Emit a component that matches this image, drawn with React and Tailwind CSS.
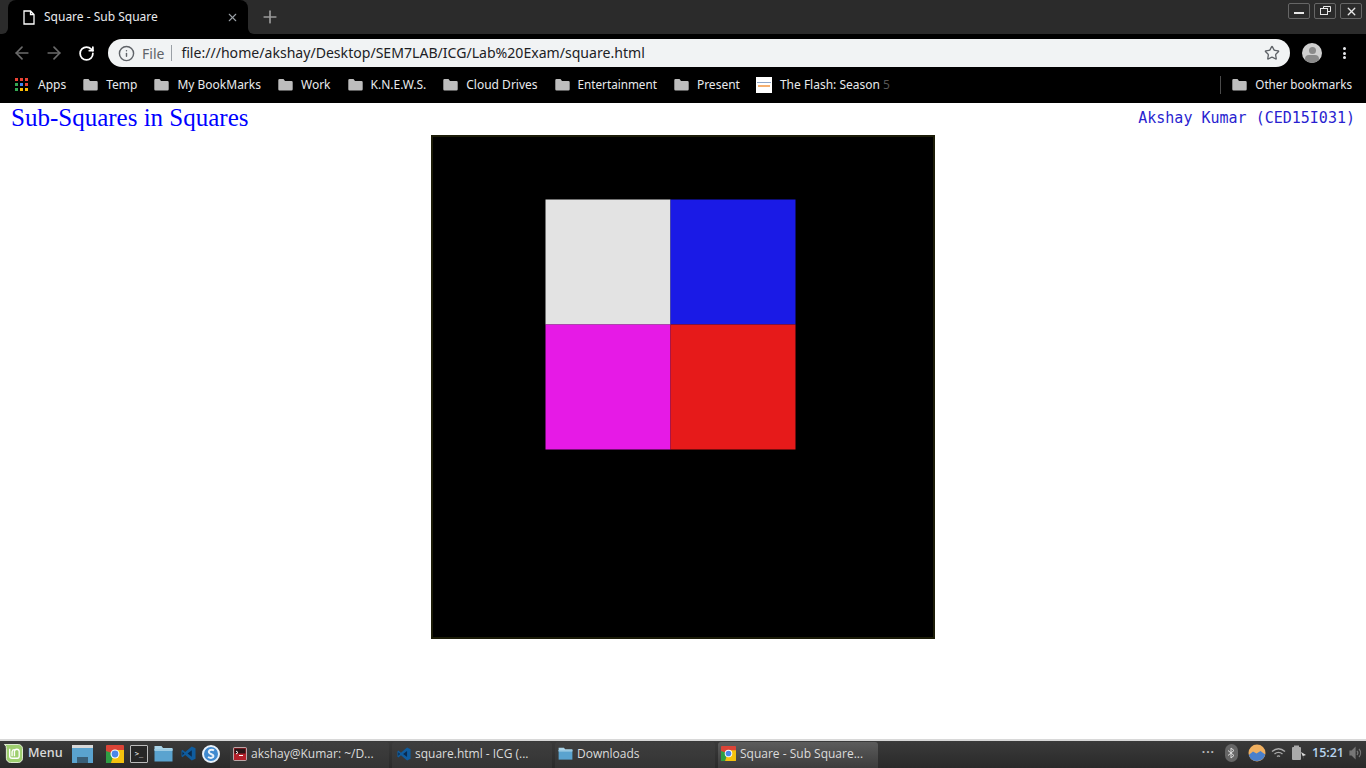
import React from 'react'
import { ArrowLeft, ArrowRight, RotateCw, Info, Star, X, Plus } from 'lucide-react'

const uiFont = "font-['Noto_Sans',sans-serif]"

const Folder = () => (
  <svg width="15" height="13" viewBox="0 0 15 13">
    <path d="M1.500 1h4l1.500 2h6.500a1.200 1.200 0 0 1 1.200 1.200v7.100a1.200 1.200 0 0 1-1.200 1.200h-12a1.200 1.200 0 0 1-1.200-1.200V2.200A1.200 1.200 0 0 1 1.500 1z" fill="#bdbdbd" />
  </svg>
)

const AppsGrid = () => {
  const colors = ['#ea4335', '#ea4335', '#ea4335', '#34a853', '#4285f4', '#ea4335', '#34a853', '#fbbc05', '#fbbc05']
  return (
    <div className="grid grid-cols-3 gap-[1.500px] w-[13px] h-[13px]">
      {colors.map((c, i) => (
        <div key={i} style={{ background: c }} />
      ))}
    </div>
  )
}

const ChromeIcon = ({ size = 18 }) => (
  <svg width={size} height={size} viewBox="0 0 18 18">
    <rect width="18" height="18" rx="1" fill="#db4437" />
    <path d="M0 6 L9 9 L5 18 L0 18z" fill="#2f9e44" />
    <path d="M9 5h9v12.500a.5.5 0 0 1-.5.5H5z" fill="#f4c20d" />
    <circle cx="9" cy="9" r="4.500" fill="#fff" />
    <circle cx="9" cy="9" r="3.400" fill="#4a86e8" />
  </svg>
)

const VsCode = ({ size = 15 }) => (
  <svg width={size} height={size} viewBox="0 0 16 16">
    <path d="M11.500 0.500 15.500 2.500V13.500L11.500 15.500 4.500 9.500 1.500 12 0.500 11V5L1.500 4 4.500 6.500z" fill="#0f5c9e" />
    <path d="M11.500 4.500 7 8l4.500 3.500z" fill="#0a2a4d" />
    <path d="M1.500 6 3.500 8 1.500 10z" fill="#0a2a4d" />
  </svg>
)

const FolderBlue = ({ width = 19, height = 17 }) => (
  <svg width={width} height={height} viewBox="0 0 19 17">
    <path d="M0.500 1h7l1.500 2h9.500v2H0.500z" fill="#a9d3e8" />
    <rect x="0.500" y="4" width="18" height="12.500" fill="#5aa3cf" />
    <rect x="0.500" y="4" width="18" height="2" fill="#9ccbe3" />
  </svg>
)

const TerminalRed = () => (
  <svg width="14" height="14" viewBox="0 0 14 14">
    <rect x="0.500" y="0.500" width="13" height="13" rx="1" fill="#b3202a" stroke="#ddd" strokeWidth="0.700" />
    <rect x="1.500" y="1.500" width="11" height="5" fill="#2b1416" />
    <path d="M3 4l2 1.500L3 7" stroke="#fff" fill="none" strokeWidth="1" />
    <path d="M6 8.500h4" stroke="#fff" strokeWidth="1" />
  </svg>
)

const Bookmark = ({ label, labelClass = 'text-[12px]' }) => (
  <div className="flex items-center gap-[8px] ml-[17px]">
    <Folder />
    <span className={`${labelClass} leading-none text-[#e8eaed] whitespace-nowrap`}>{label}</span>
  </div>
)

const TaskItem = ({ icon, label, width, active }) => (
  <div
    className={`flex items-center gap-[4px] h-[26px] mt-[1px] pl-[3px] pb-[3px] rounded-t-[3px] text-[#dcdcdc] text-[12px] whitespace-nowrap overflow-hidden ${width} ${
      active ? 'bg-gradient-to-b from-[#5c5c5c] to-[#3c3c3c]' : 'bg-gradient-to-b from-[#3e3e3e] to-[#343434]'
    }`}
  >
    {icon}
    <span>{label}</span>
  </div>
)

const WinBtn = ({ children }) => (
  <div className="w-[22px] h-[16px] rounded-[2px] border border-[#666] flex items-center justify-center text-[#e8e8e8]">
    {children}
  </div>
)

export default function App() {
  return (
    <div className="w-[1366px] h-[768px] flex flex-col overflow-hidden bg-white">
      {/* tab strip */}
      <div className={`h-[34px] shrink-0 bg-[linear-gradient(to_bottom,#2b2b2b_50%,#000_50%)] flex ${uiFont}`}>
        <div className="w-[8px] bg-[#2b2b2b] rounded-br-[6px]" />
        <div className="w-[240px] h-[34px] bg-black rounded-t-[8px] flex items-center pl-[15px] pr-[9px] text-[12px] text-[#e8eaed]">
          <svg width="12" height="15" viewBox="0 0 12 15" className="mr-[9px]">
            <path d="M1 1h6.500L11 4.500V14H1z M7.500 1v3.500H11" fill="none" stroke="#fff" strokeWidth="1.300" />
          </svg>
          <span>Square - Sub Square</span>
          <X size={13} strokeWidth={2} className="ml-auto text-[#9aa0a6]" />
        </div>
        <div className="flex-1 bg-[#2b2b2b] rounded-bl-[6px] flex pr-[4px]">
          <Plus size={20} strokeWidth={2} className="ml-[12px] mt-[7px] text-[#9a9a9a]" />
          <div className="ml-auto mt-[3px] flex gap-[4px]">
            <WinBtn>
              <div className="mt-[4px] w-[10px] h-[2px] bg-[#e8e8e8]" />
            </WinBtn>
            <WinBtn>
              <svg width="11" height="10" viewBox="0 0 11 10" fill="none" stroke="currentColor">
                <path d="M3.500 2.500V.5h7v5H8" />
                <rect x="0.500" y="2.500" width="7" height="6" />
              </svg>
            </WinBtn>
            <WinBtn>
              <X size={13} strokeWidth={2.500} />
            </WinBtn>
          </div>
        </div>
      </div>

      {/* toolbar */}
      <div className={`h-[36px] shrink-0 pt-[2px] bg-black flex items-center pl-[12px] ${uiFont}`}>
        <ArrowLeft size={20} strokeWidth={2} className="text-[#6b6b6b]" />
        <ArrowRight size={20} strokeWidth={2} className="ml-[12px] text-[#6b6b6b]" />
        <RotateCw size={17} strokeWidth={2.500} className="ml-[13.500px] text-white" />
        <div className="ml-[13.500px] w-[1182px] h-[28px] bg-[#f1f3f4] rounded-full flex items-center pl-[10px] pr-[10px]">
          <Info size={17} strokeWidth={2} className="text-[#5f6368]" />
          <span className="ml-[7px] text-[14px] text-[#5f6368]">File</span>
          <div className="ml-[7px] w-px h-[16px] bg-[#9aa0a6]" />
          <span className="ml-[9px] text-[14.080px] text-[#202124]">file:///home/akshay/Desktop/SEM7LAB/ICG/Lab%20Exam/square.html</span>
          <Star size={16} strokeWidth={2} className="ml-auto text-[#5f6368]" />
        </div>
        <div className="ml-[12px] w-[20px] h-[20px] rounded-full bg-[#d0d0d0] overflow-hidden flex flex-col items-center">
          <div className="mt-[4px] w-[7px] h-[7px] rounded-full bg-[#8a8a8a]" />
          <div className="mt-[1px] w-[14px] h-[8px] rounded-full bg-[#8a8a8a]" />
        </div>
        <div className="ml-[21px] flex flex-col gap-[1.500px]">
          <div className="w-[3px] h-[3px] rounded-full bg-[#e8eaed]" />
          <div className="w-[3px] h-[3px] rounded-full bg-[#e8eaed]" />
          <div className="w-[3px] h-[3px] rounded-full bg-[#e8eaed]" />
        </div>
      </div>

      {/* bookmarks */}
      <div className={`h-[33px] shrink-0 pb-[4px] bg-black flex items-center pl-[15px] pr-[14px] ${uiFont}`}>
        <div className="flex items-center gap-[10px]">
          <AppsGrid />
          <span className="text-[12px] leading-none text-[#e8eaed]">Apps</span>
        </div>
        <Bookmark label="Temp" />
        <Bookmark label="My BookMarks" />
        <Bookmark label="Work" />
        <Bookmark label="K.N.E.W.S." />
        <Bookmark label="Cloud Drives" />
        <Bookmark label="Entertainment" labelClass="text-[11.700px]" />
        <Bookmark label="Present" />
        <div className="ml-[16px] flex items-center gap-[8px]">
          <div className="w-[16px] h-[16px] bg-white flex flex-col items-center justify-center gap-[2px]">
            <div className="w-[14px] h-px bg-[#8fa6c8]" />
            <div className="w-[12px] h-[2px] bg-[#f5b070]" />
          </div>
          <span className="text-[12px] leading-none text-[#e8eaed] whitespace-nowrap">
            The Flash: Season <span className="text-[#555]">5</span>
          </span>
        </div>
        <div className="ml-auto w-px h-[18px] bg-[#4a4a4a]" />
        <div className="flex items-center gap-[8px] ml-[11px]">
          <Folder />
          <span className="text-[11.700px] leading-none text-[#e8eaed] whitespace-nowrap">Other bookmarks</span>
        </div>
      </div>

      {/* page */}
      <div className="flex-1 min-h-0 bg-white">
        <div className="h-[32px] flex justify-between pl-[11px] pr-[11px]">
          <h1 className="font-['Liberation_Serif',serif] text-[25px] leading-[30px] text-[#0000ff]">Sub-Squares in Squares</h1>
          <span className="font-['DejaVu_Sans_Mono',monospace] text-[15px] leading-[30px] text-[#2a1fd0]">Akshay Kumar (CED15I031)</span>
        </div>
        <div className="ml-[431px] w-[504px] h-[504px] bg-black border-2 border-[#1c1c08] pl-[112px] pt-[62px]">
          {/* canvas draws on half pixels in the original */}
          <div className="grid grid-cols-[125px_125px] grid-rows-[125px_125px] translate-x-[0.5px] translate-y-[0.5px]">
            <div className="bg-[#e3e3e3]" />
            <div className="bg-[#1a1ae6]" />
            <div className="bg-[#e61ae6]" />
            <div className="bg-[#e61a1a]" />
          </div>
        </div>
      </div>

      {/* taskbar */}
      <div className="h-[29px] shrink-0 border-t-2 border-[#d8d8d8] bg-gradient-to-b from-[#3a3a3a] to-[#2a2a2a] flex items-start font-['Open_Sans',sans-serif]">
        <div className="flex items-center h-[26px] pb-[2px] pl-[4px] w-[68px]">
          <svg width="19" height="19" viewBox="0 0 20 20">
            <path d="M0.500 0.500H15a4.500 4.500 0 0 1 4.500 4.500v10a4.500 4.500 0 0 1-4.500 4.500H7a4.500 4.500 0 0 1-4.500-4.500V5a4.500 4.500 0 0 0-2-4.500z" fill="#9fcf70" stroke="#e8f2dc" />
            <path d="M6 5v7.500a2.500 2.500 0 0 0 2.500 2.500H14a2 2 0 0 0 2-2V8a2.500 2.500 0 0 0-5 0v5M8.500 13V8A2.500 2.500 0 0 1 11 6" fill="none" stroke="#fff" strokeWidth="1.400" />
          </svg>
          <span className="ml-[5px] text-[12.500px] font-semibold text-[#d8d8d8]">Menu</span>
        </div>
        <div className="mt-[4px] ml-[4px] w-[21px] h-[18px] bg-[#5aa3cf] border-t-[3px] border-[#d8d8d8] flex justify-center items-end">
          <div className="w-[11px] h-[6px] bg-[#3a5f78]" />
        </div>
        <div className="mt-[4px] ml-[13px]">
          <ChromeIcon size={18} />
        </div>
        <div className="mt-[4px] ml-[6px] w-[18px] h-[18px] bg-[#262626] border border-[#bbb] rounded-[1px] flex items-center justify-center">
          <span className="text-[7px] leading-none text-white font-['DejaVu_Sans_Mono',monospace]">&gt;_</span>
        </div>
        <div className="mt-[4px] ml-[6px]">
          <FolderBlue />
        </div>
        <div className="mt-[5px] ml-[8px]">
          <VsCode />
        </div>
        <div className="mt-[4px] ml-[6px] w-[18px] h-[18px] rounded-full bg-[#3f8ad0] border-2 border-[#e8f1fa] flex items-center justify-center">
          <svg width="12" height="12" viewBox="0 0 12 12">
            <path d="M9 2.500C7 1 3 2 4 4.500c.8 2 4.500 1.500 4.500 3.500 0 2-3 2.500-5.500 1" fill="none" stroke="#e8f1fa" strokeWidth="2" />
          </svg>
        </div>
        <div className="ml-[10px] flex gap-[3px]">
          <TaskItem icon={<TerminalRed />} label="akshay@Kumar: ~/D..." width="w-[159px]" />
          <TaskItem icon={<div className="ml-[2px]"><VsCode size={14} /></div>} label="square.html - ICG (..." width="w-[160px]" />
          <TaskItem icon={<FolderBlue width={15} height={13} />} label="Downloads" width="w-[160px]" />
          <TaskItem icon={<ChromeIcon size={15} />} label="Square - Sub Square..." width="w-[160px]" active />
        </div>
        <div className="ml-auto h-[26px] pb-[2px] flex items-center pr-[3px] text-[#c8c8c8]">
          <span className="text-[12px] font-bold tracking-[1px] leading-none text-[#bbb] mb-[3px]">···</span>
          <div className="ml-[10px] w-[13px] h-[18px] rounded-full bg-[#666] flex items-center justify-center">
            <svg width="8" height="12" viewBox="0 0 8 12" fill="none" stroke="#ddd" strokeWidth="1">
              <path d="M1 3.500l6 5L4 11V1l3 2.500-6 5" />
            </svg>
          </div>
          <svg width="18" height="18" viewBox="0 0 18 18" className="ml-[10px]">
            <circle cx="9" cy="9" r="8.500" fill="#f0b060" />
            <path d="M.8 11 5 7.500l3.500 2 4-2.500 4.700 3.500A8.500 8.500 0 0 1 .8 11z" fill="#4a80cc" />
          </svg>
          <svg width="15" height="12" viewBox="0 0 15 12" fill="none" stroke="#aaa" strokeWidth="1.400" className="ml-[5px]">
            <path d="M1 4.500c4-3.500 9-3.500 13 0M3.500 7c2.500-2 5.500-2 8 0M6 9.500c1-.8 2-.8 3 0" />
          </svg>
          <svg width="16" height="16" viewBox="0 0 16 16" className="ml-[5px]">
            <rect x="1" y="2" width="9" height="13" rx="1" fill="#aaa" />
            <rect x="3" y="0.500" width="5" height="2" fill="#aaa" />
            <path d="M10 7l5 3-3 1 1 3z" fill="#ddd" />
          </svg>
          <span className="ml-[5px] text-[12.500px] font-semibold text-[#b8d4ee]">15:21</span>
          <svg width="14" height="14" viewBox="0 0 14 14" fill="none" stroke="#777" strokeWidth="1.200" className="ml-[5px]">
            <path d="M1 5h2l3-3v10L3 9H1z" fill="#777" />
            <path d="M8 5a3 3 0 0 1 0 4M10 3a6 6 0 0 1 0 8" />
          </svg>
        </div>
      </div>
    </div>
  )
}
